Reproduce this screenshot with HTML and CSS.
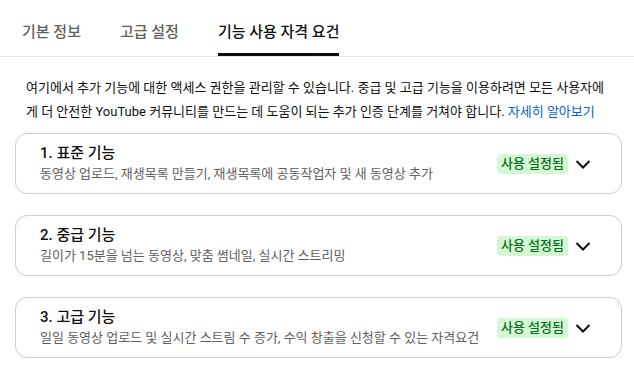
FILE: index.html
```html
<!DOCTYPE html>
<html lang="ko">
<head>
  <meta charset="UTF-8">
  <meta name="viewport" content="width=device-width, initial-scale=1.0">
  <title>기능 사용 자격 요건</title>
  <link rel="stylesheet" href="styles.css">
</head>
<body>

<div class="tabs">
  <div class="tab">기본 정보</div>
  <div class="tab">고급 설정</div>
  <div class="tab active">기능 사용 자격 요건</div>
</div>

<p class="intro">
  여기에서 추가 기능에 대한 액세스 권한을 관리할 수 있습니다. 중급 및 고급 기능을 이용하려면 모든 사용자에게 더 안전한 YouTube 커뮤니티를 만드는 데 도움이 되는 추가 인증 단계를 거쳐야 합니다. <a href="#">자세히 알아보기</a>
</p>

<div class="cards">
  <div class="card">
    <div class="card-text">
      <div class="card-title">1. 표준 기능</div>
      <div class="card-desc">동영상 업로드, 재생목록 만들기, 재생목록에 공동작업자 및 새 동영상 추가</div>
    </div>
    <span class="badge">사용 설정됨</span>
    <svg class="chevron" width="24" height="24" viewBox="0 0 24 24"><path d="M5.5 9l6.5 6.5 6.5-6.5" fill="none" stroke="#0f0f0f" stroke-width="2"/></svg>
  </div>

  <div class="card">
    <div class="card-text">
      <div class="card-title">2. 중급 기능</div>
      <div class="card-desc">길이가 15분을 넘는 동영상, 맞춤 썸네일, 실시간 스트리밍</div>
    </div>
    <span class="badge">사용 설정됨</span>
    <svg class="chevron" width="24" height="24" viewBox="0 0 24 24"><path d="M5.5 9l6.5 6.5 6.5-6.5" fill="none" stroke="#0f0f0f" stroke-width="2"/></svg>
  </div>

  <div class="card">
    <div class="card-text">
      <div class="card-title">3. 고급 기능</div>
      <div class="card-desc">일일 동영상 업로드 및 실시간 스트림 수 증가, 수익 창출을 신청할 수 있는 자격요건</div>
    </div>
    <span class="badge">사용 설정됨</span>
    <svg class="chevron" width="24" height="24" viewBox="0 0 24 24"><path d="M5.5 9l6.5 6.5 6.5-6.5" fill="none" stroke="#0f0f0f" stroke-width="2"/></svg>
  </div>
</div>

</body>
</html>
```

FILE: styles.css
```css
* {
  box-sizing: border-box;
}
body {
  margin: 0;
  background-color: #fff;
  font-family: Roboto, "Noto Sans CJK KR", sans-serif;
  color: #0f0f0f;
}

/* pestañas de arriba */
.tabs {
  display: flex;
  gap: 39px;
  padding-left: 22px;
  height: 57px;
  border-bottom: 1px solid #e5e5e5;
}
.tab {
  display: flex;
  align-items: center;
  font-size: 15px;
  font-weight: 500;
  color: #606060;
  border-bottom: 3px solid transparent;
  padding-top: 8px;
}
.tab.active {
  color: #0f0f0f;
  border-bottom-color: #0f0f0f;
}

.intro {
  margin: 19px 0 0;
  padding: 0 20px 0 26px;
  font-size: 13px;
  line-height: 24px;
}
.intro a {
  color: #065fd4;
  text-decoration: none;
}

.cards {
  display: flex;
  flex-direction: column;
  gap: 21px;
  padding: 9px 12px 0 15px;
}
.card {
  display: flex;
  align-items: center;
  height: 61px;
  padding: 0 26px 0 24px;
  border: 1px solid #ccc;
  border-radius: 12px;
}
.card-text {
  flex: 1;
  padding-bottom: 2px;
}
.card-title {
  font-size: 15px;
  font-weight: 500;
  line-height: 22px;
}
.card-desc {
  font-size: 13px;
  color: #606060;
  line-height: 20px;
}
.badge {
  background-color: #d4f7d4;
  color: #0b6b1f;
  font-size: 13px;
  font-weight: 500;
  line-height: 20px;
  padding: 0 4px;
  border-radius: 4px;
  margin-right: 3px;
}
.chevron {
  display: block;
}
```
